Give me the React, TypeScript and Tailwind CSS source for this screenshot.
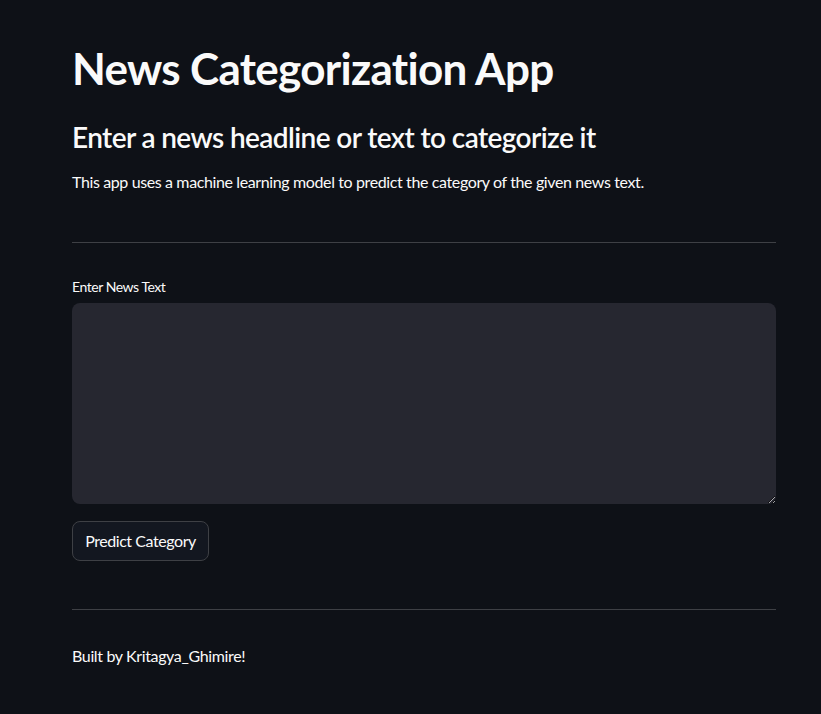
import React, { useState } from 'react'

const font = { fontFamily: '"Lato", "Noto Sans", sans-serif' }

const App = () => {
  const [text, setText] = useState('')

  return (
    <div className="min-h-[714px] w-full bg-[#0e1117] text-[#fafafa]" style={font}>
      <div className="ml-[72px] flex w-[704px] flex-col">
        {/* HEADER */}
        <h1 className="mt-[42px] text-[44px] leading-[52px] font-bold tracking-[-0.7px]">
          News Categorization App
        </h1>
        <h3 className="mt-[25px] text-[28px] leading-[36px] font-semibold tracking-[-0.6px]">
          Enter a news headline or text to categorize it
        </h3>
        <p className="mt-[15px] text-[16px] leading-[24px] tracking-[-0.38px]">
          This app uses a machine learning model to predict the category of the given news text.
        </p>

        <hr className="mt-[48px] border-0 border-t border-[#3e4045]" />

        {/* FORM */}
        <label htmlFor="news" className="mt-[34px] text-[14px] leading-[20px] tracking-[-0.45px]">
          Enter News Text
        </label>
        <textarea
          id="news"
          value={text}
          onChange={(e) => setText(e.target.value)}
          className="mt-[6px] h-[201px] w-full rounded-lg bg-[#262730] px-4 py-3 text-[16px] text-[#fafafa] outline-none"
        />

        <div className="mt-[17px]">
          <button className="h-[40px] w-[137px] rounded-lg border border-[#3e4045] bg-[#131720] text-[16px] leading-[24px] tracking-[-0.44px]">
            Predict Category
          </button>
        </div>

        <hr className="mt-[48px] border-0 border-t border-[#3e4045]" />

        {/* FOOTER */}
        <p className="mt-[34px] text-[16px] leading-[24px] tracking-[-0.36px]">Built by Kritagya_Ghimire!</p>
      </div>
    </div>
  )
}

export default App
